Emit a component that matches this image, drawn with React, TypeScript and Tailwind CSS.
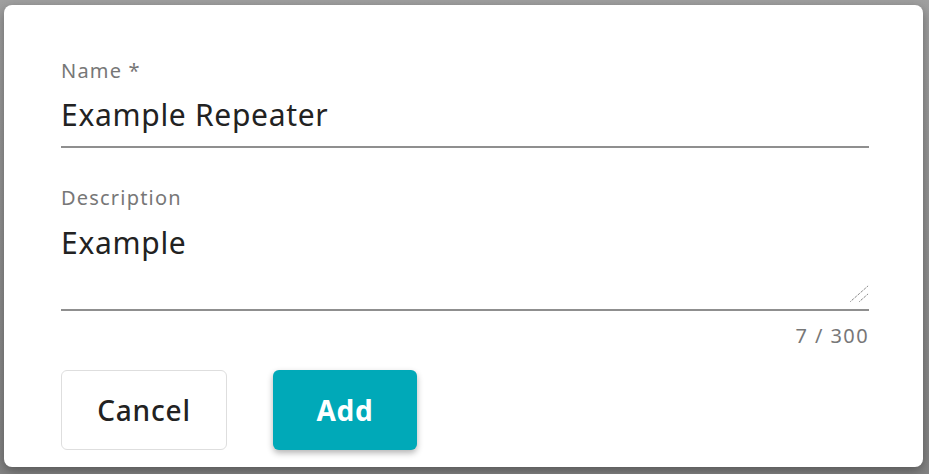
import { useState } from "react"

const font = { fontFamily: '"Noto Sans", "Open Sans", sans-serif' }

export default function App() {
  const [name, setName] = useState("Example Repeater")
  const [desc, setDesc] = useState("Example")

  return (
    <div className="w-[929px] h-[474px] bg-gradient-to-b from-[#a0a0a0] to-[#848484] pt-[5px] pl-[4px]" style={font}>
      <div className="w-[919px] h-[462px] rounded-lg bg-white pl-[57px] pr-[54px] pt-[54px] shadow-[0_4px_12px_rgba(0,0,0,0.35)]">
        {/* name */}
        <label className="block text-[20px] leading-6 tracking-[1.2px] text-[#777]">Name *</label>
        <input
          value={name}
          onChange={(e) => setName(e.target.value)}
          className="mt-[12px] block w-full border-b-2 border-[#8f8f8f] pb-[11px] text-[30px] leading-[40px] tracking-[0.7px] text-[#222] outline-none"
        />

        {/* description */}
        <label className="mt-[38px] block text-[20px] leading-6 tracking-[1.2px] text-[#777]">Description</label>
        <div className="relative mt-[13px]">
          <textarea
            value={desc}
            maxLength={300}
            onChange={(e) => setDesc(e.target.value)}
            className="block h-[88px] w-full resize-none border-b-2 border-[#8f8f8f] text-[30px] leading-[40px] tracking-[0.7px] text-[#222] outline-none"
          />
          <svg className="pointer-events-none absolute bottom-[9px] right-0 h-[17px] w-[19px]" viewBox="0 0 19 17" fill="none" stroke="#555" strokeWidth="1" strokeDasharray="1 1">
            <line x1="0.5" y1="16.5" x2="18.5" y2="0.5" />
            <line x1="9.5" y1="16.5" x2="18.5" y2="8.5" />
          </svg>
        </div>
        <div className="mt-[13px] text-right text-[20px] leading-6 tracking-[1.4px] text-[#777]">{desc.length} / 300</div>

        <div className="mt-[22px] flex gap-[46px]">
          <button className="h-[80px] w-[166px] rounded-md border border-[#dedede] bg-white text-[28px] font-medium tracking-[0.8px] text-[#222]">
            Cancel
          </button>
          <button className="h-[80px] w-[144px] rounded-md bg-[#00a9b8] text-[28px] font-bold tracking-[0.8px] text-white shadow-[0_3px_6px_rgba(0,0,0,0.3)]">
            Add
          </button>
        </div>
      </div>
    </div>
  )
}
